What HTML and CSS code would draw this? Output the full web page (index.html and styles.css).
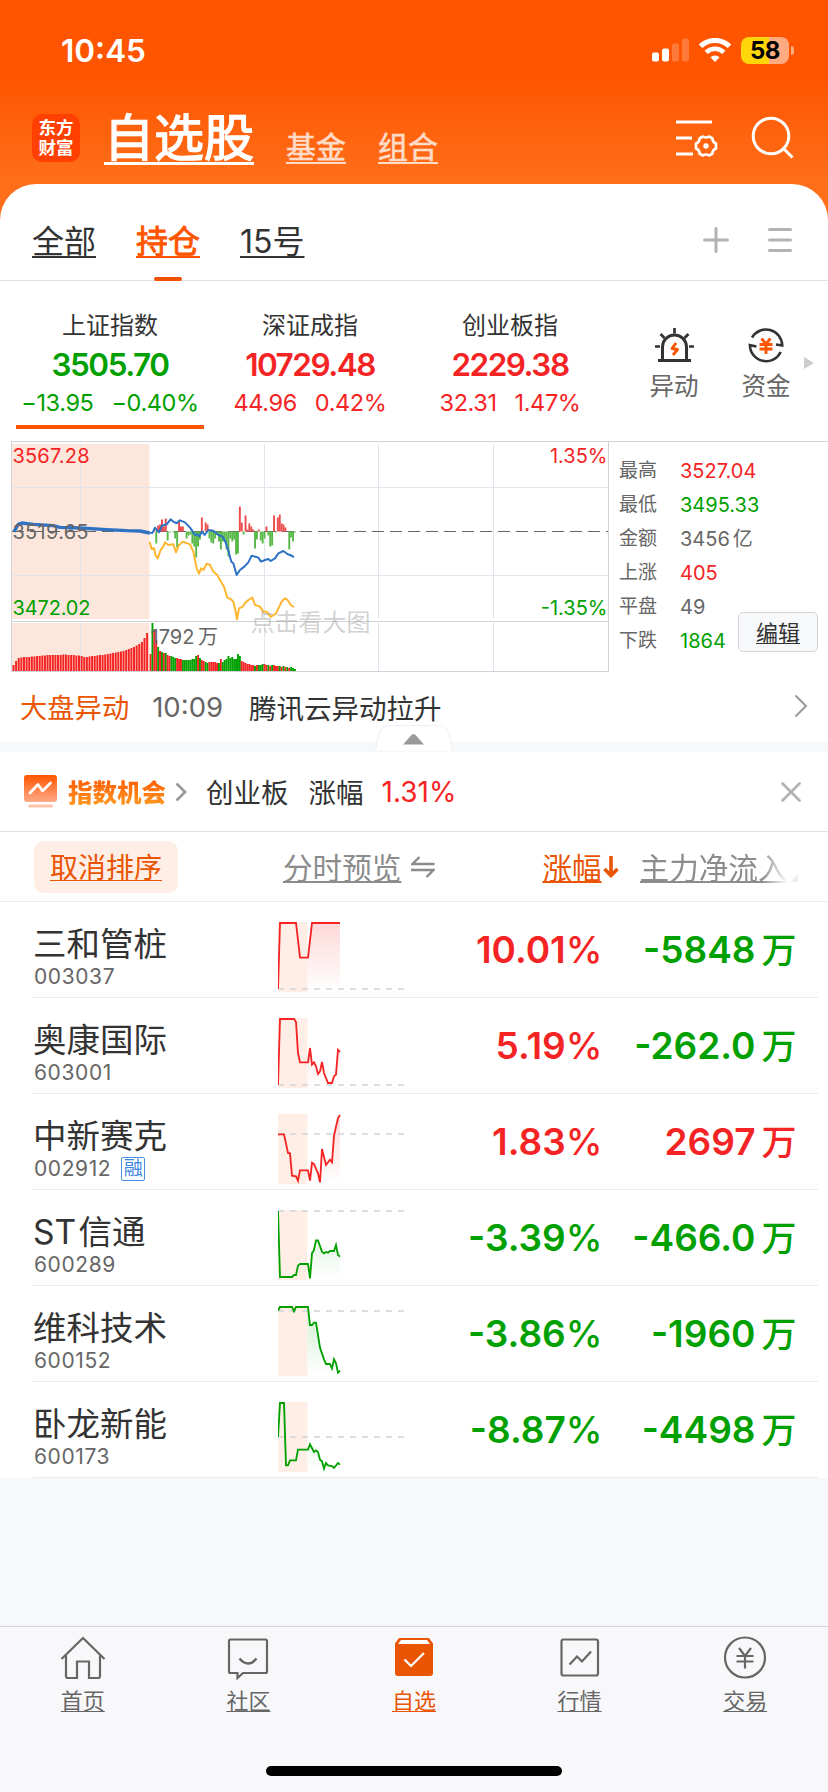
FILE: index.html
```html
<!DOCTYPE html>
<html lang="zh-CN">
<head>
  <meta charset="UTF-8" />
  <meta name="viewport" content="width=device-width, initial-scale=1.0"/>
  <title>自选股</title>
  <link rel="stylesheet" href="styles.css">
</head>
<body>
  <header class="header">
    <div class="status">
      <span class="time">10:45</span>
      <svg class="signal" width="37" height="24" viewBox="0 0 37 24" fill="#fff">
        <rect x="0" y="14.500" width="7" height="9" rx="2"/>
        <rect x="10" y="10.500" width="7" height="13" rx="2"/>
        <rect x="20" y="5.500" width="7" height="18" rx="2" opacity=".22"/>
        <rect x="30" y=".5" width="7" height="23" rx="2" opacity=".22"/>
      </svg>
      <svg class="wifi" width="32" height="24" viewBox="0 0 32 24">
        <path d="M1.500 8.200A21 21 0 0 1 30.500 8.200" fill="none" stroke="#fff" stroke-width="5"/>
        <path d="M7.200 14.300A12.500 12.500 0 0 1 24.800 14.300" fill="none" stroke="#fff" stroke-width="4.600"/>
        <path d="M11.400 19.200A7 7 0 0 1 20.600 19.200L16 24Z" fill="#fff"/>
      </svg>
      <span class="battery">58</span>
      <span class="battery-tip"></span>
    </div>
    <div class="title-row">
      <div class="logo"><span>东方</span><span>财富</span></div>
      <a class="title">自选股</a>
      <a class="subtitle">基金</a>
      <a class="subtitle">组合</a>
      <svg class="filter" width="44" height="40" viewBox="0 0 44 40" fill="none" stroke="#fff" stroke-width="3">
        <path d="M1 4H37M1 20H17M1 36H18"/>
        <path d="M28 18.500Q31 20.500 34 18.500L37.300 20.200Q37.300 24 41 25.500V30.500Q37.300 32 37.300 35.800L34 37.500Q31 35.500 28 37.500L24.700 35.800Q24.700 32 21 30.500V25.500Q24.700 24 24.700 20.200Z" stroke-width="2.700" stroke-linejoin="round"/>
        <circle cx="31" cy="28" r="2.700" fill="#fff" stroke="none"/>
      </svg>
      <svg class="search" width="44" height="44" viewBox="0 0 44 44" fill="none" stroke="#fff" stroke-width="3">
        <circle cx="20" cy="20" r="17.800"/>
        <path d="M32.500 32.500L41.500 41.500"/>
      </svg>
    </div>
  </header>

  <main class="sheet-wrap">
    <section class="sheet">
      <nav class="tabs">
        <a class="tab">全部</a>
        <a class="tab active">持仓</a>
        <a class="tab">15号</a>
        <svg class="plus" width="26" height="26" viewBox="0 0 26 26" stroke="#b3b3b3" stroke-width="3" stroke-linecap="round"><path d="M1.500 13H24.500M13 1.500V24.500"/></svg>
        <svg class="list" width="24" height="26" viewBox="0 0 24 26" stroke="#b3b3b3" stroke-width="3" stroke-linecap="round"><path d="M1.500 2.500H22.500M1.500 13H22.500M1.500 23.500H22.500"/></svg>
      </nav>

      <div class="indexes">
        <div class="index down selected">
          <div class="index-name">上证指数</div>
          <div class="index-value">3505.70</div>
          <div class="index-change"><span>−13.95</span><span>−0.40%</span></div>
        </div>
        <div class="index up">
          <div class="index-name">深证成指</div>
          <div class="index-value">10729.48</div>
          <div class="index-change"><span>44.96</span><span>0.42%</span></div>
        </div>
        <div class="index up">
          <div class="index-name">创业板指</div>
          <div class="index-value">2229.38</div>
          <div class="index-change"><span>32.31</span><span>1.47%</span></div>
        </div>
        <div class="tool tool-alert">
          <svg width="40" height="36" viewBox="0 0 40 36" fill="none" stroke="#333" stroke-width="3">
            <path d="M4 33.500H37M8.500 33V20A12 12 0 0 1 32.500 20V33"/>
            <path d="M20.500 1V6.500M6.500 7L10.500 11M34.500 7L30.500 11M1 19.500H6M35 19.500H40" stroke-width="2.700"/>
            <path d="M22 16L18 21.500L23.500 22.500L19 28" stroke="#ff5500" stroke-width="2.800" stroke-linejoin="round"/>
          </svg>
          <span>异动</span>
        </div>
        <div class="tool">
          <svg width="40" height="36" viewBox="0 0 40 36" fill="none" stroke="#333" stroke-width="2.600">
            <path d="M6 10.500A16.200 16.200 0 0 1 36.200 18.500L30 17.500"/>
            <path d="M10.500 19.500L3.900 18.200A16.200 16.200 0 0 0 34.700 25"/>
            <path d="M15.500 11.500L20 17L24.500 11.500M13.500 17.500H26.500M13.500 22H26.500M20 17V27" stroke="#ff5500" stroke-width="2.800"/>
          </svg>
          <span>资金</span>
        </div>
        <svg class="more" width="10" height="12" viewBox="0 0 10 12"><path d="M0 0L10 6L0 12Z" fill="#ccc"/></svg>
      </div>

      <div class="market">
        <svg class="chart" width="609" height="231" viewBox="0 0 609 231">
          <rect x="12" y="3" width="137.500" height="175" fill="#fde6db"/>
          <rect x="12" y="182" width="137.500" height="48" fill="#fde6db"/>
          <path d="M80.500 3V178M264.500 3V178M378.500 3V178M493.500 3V178M80.500 182V230M264.500 182V230M378.500 182V230M493.500 182V230M12 46.500H608M12 134.500H608" stroke="#e2e4ec" fill="none"/>
          <path d="M11 .5H609M11.500 0V230.500H608.500V0M12 180.500H608" stroke="#d0d3d9" fill="none"/>
          <path d="M12 90.500H608" stroke="#666" stroke-dasharray="12 6"/>
          <g id="flow"></g>
          <g id="volume"></g>
          <!-- lines are plotted on a 3x grid -->
          <g transform="translate(0 -6) scale(.33333)" fill="none" stroke-linejoin="round">
            <path stroke="#ffb62e" stroke-width="6" d="M449 320L455 342L462 340L467 362L473 370L482 345L490 335L495 322L505 330L520 328L528 352L536 332L548 320L570 328L580 350L590 400L597 416L603 400L610 405L620 386L630 390L640 410L652 420L660 435L672 455L682 488L692 492L700 500L706 525L711 553L717 520L728 515L735 504L745 495L757 488L765 510L780 515L790 530L800 530L812 546L828 535L845 500L855 490L863 495L872 510L882 516"/>
            <path stroke="#2e72c4" stroke-width="10" d="M42 290L55 268L65 264L100 268L160 272L180 277L240 279L320 284L380 287L420 288L449 294"/>
            <path stroke="#2e72c4" stroke-width="6" d="M449 294L458 293L465 278L477 292L486 272L500 268L512 253L520 260L530 265L540 256L555 262L570 278L585 300L592 298L598 304L606 290L614 300L625 285L640 287L655 300L668 305L676 320L686 350L694 380L700 385L710 420L720 405L733 395L745 382L755 362L775 368L783 380L795 375L805 372L812 378L825 370L835 355L850 348L862 357L870 360L882 366"/>
          </g>
          <g class="chart-text">
            <text x="12.500" y="21.500" fill="#f52424" textLength="77">3567.28</text>
            <text x="12.500" y="97.500" fill="#666" textLength="76">3519.65</text>
            <text x="12.500" y="173.500" fill="#00a000" textLength="78">3472.02</text>
            <text x="607.500" y="21.500" fill="#f52424" text-anchor="end">1.35%</text>
            <text x="607.500" y="173.500" fill="#00a000" text-anchor="end">-1.35%</text>
            <text class="volume-max" x="150.500" y="202.500" fill="#666">1792 万</text>
            <text class="watermark" x="250.500" y="190">点击看大图</text>
          </g>
        </svg>
        <div class="stats">
          <span>最高</span><b class="up">3527.04</b>
          <span>最低</span><b class="down">3495.33</b>
          <span>金额</span><b>3456<i>亿</i></b>
          <span>上涨</span><b class="up">405</b>
          <span>平盘</span><b>49</b>
          <span>下跌</span><b class="down">1864</b>
          <a class="edit">编辑</a>
        </div>
      </div>

      <div class="news">
        <span class="news-tag">大盘异动</span>
        <span class="news-time">10:09</span>
        <span class="news-text">腾讯云异动拉升</span>
        <svg width="14" height="24" viewBox="0 0 14 24" fill="none" stroke="#999" stroke-width="2"><path d="M1.500 1.500L12 12L1.500 22.500"/></svg>
      </div>
    </section>

    <div class="divider">
      <svg class="fold" width="78" height="26" viewBox="0 0 78 26">
        <path d="M.5 25.500L3 12Q5 .5 15 .5H63Q73 .5 75 12L77.500 25.500" fill="#fff" stroke="#eeeff2"/>
        <path d="M28 19.500L37 9.500Q38.500 8.500 40 9.500L49 19.500Z" fill="#999"/>
      </svg>
    </div>

    <section class="chance">
      <svg width="34" height="34" viewBox="0 0 34 34">
        <defs><linearGradient id="card" x1="0" y1="0" x2="0" y2="1"><stop offset="0" stop-color="#ff5500"/><stop offset="1" stop-color="#ffaa88"/></linearGradient></defs>
        <rect width="33" height="27" rx="3" fill="url(#card)"/>
        <path d="M6 18L14 9.500L18.500 16L26.500 8" fill="none" stroke="#fff" stroke-width="2.700" stroke-linecap="round" stroke-linejoin="round"/>
        <rect x="4" y="29.500" width="25" height="3" rx="1.500" fill="#ffc4a8"/>
      </svg>
      <span class="chance-title">指数机会</span>
      <svg class="chance-arrow" width="12" height="20" viewBox="0 0 12 20" fill="none" stroke="#999" stroke-width="2.700"><path d="M1.500 1.500L10 10L1.500 18.500"/></svg>
      <span class="chance-board">创业板</span>
      <span class="chance-label">涨幅</span>
      <span class="chance-value up">1.31%</span>
      <svg class="close" width="20" height="20" viewBox="0 0 20 20" stroke="#b3b3b3" stroke-width="2.700" stroke-linecap="round"><path d="M1.500 1.500L18.500 18.500M18.500 1.500L1.500 18.500"/></svg>
    </section>

    <section class="table">
      <div class="table-head">
        <a class="cancel">取消排序</a>
        <a class="col-preview">分时预览</a>
        <svg class="swap" width="24" height="22" viewBox="0 0 24 22" fill="none" stroke="#8c8c8c" stroke-width="2.400"><path d="M8.500 1L1.500 8H23.500M0 14H22.500L15.500 21"/></svg>
        <a class="col-rise">涨幅</a>
        <svg class="sort" width="16" height="22" viewBox="0 0 16 22" fill="none" stroke="#ea5504" stroke-width="3.600"><path d="M8 0V19M1.500 13L8 19.500L14.500 13"/></svg>
        <a class="col-flow">主力净流入</a>
        <svg class="corner" width="8" height="8" viewBox="0 0 8 8"><path d="M8 0V8H0Z" fill="#eee"/></svg>
      </div>
      <div id="rows"></div>
    </section>
  </main>

  <nav class="tabbar">
    <a>
      <svg width="46" height="44" viewBox="0 0 46 44"><path d="M1.500 23L23 2L44.500 23M6 19.500V40Q6 42 8 42H17V25.500H29V42H38Q40 42 40 40V19.500"/></svg>
      <span>首页</span>
    </a>
    <a>
      <svg width="46" height="44" viewBox="0 0 46 44"><path d="M5.500 3.500H40.500Q42 3.500 42 5V35.500Q42 37 40.500 37H18L12.500 42V37H5.500Q4 37 4 35.500V5Q4 3.500 5.500 3.500Z"/><path d="M14.500 22.500Q23 32.500 31.500 22.500" stroke-width="2.600"/></svg>
      <span>社区</span>
    </a>
    <a class="current">
      <svg width="46" height="44" viewBox="0 0 46 44"><path class="solid" d="M8 2H38L42 7.500V37Q42 40 39 40H7Q4 40 4 37V7.500Z"/><path d="M10 4H36L39 8H7Z" fill="#fff" stroke="none"/><path class="tick" d="M13.500 23.500L20 30L33 17"/></svg>
      <span>自选</span>
    </a>
    <a>
      <svg width="46" height="44" viewBox="0 0 46 44"><rect x="4.500" y="3.500" width="36.500" height="36" rx="2"/><path d="M12.500 28.500L20 20.500L25 25.500L34 15.500"/></svg>
      <span>行情</span>
    </a>
    <a>
      <svg width="46" height="44" viewBox="0 0 46 44"><circle cx="23" cy="21.500" r="20"/><path d="M17 12L23 20L29 12M14.500 20H31.500M14.500 25.500H31.500M23 20V32.500"/></svg>
      <span>交易</span>
    </a>
  </nav>
  <div class="home-bar"></div>

  <script src="script.js"></script>
</body>
</html>
```
FILE: styles.css
```css
* {
  box-sizing: border-box;
}
body {
  margin: 0;
  width: 828px;
  height: 1792px;
  overflow: hidden;
  display: flex;
  flex-direction: column;
  background: #f7f8fb;
  color: #333;
  font-family: Inter, "Noto Sans CJK SC", sans-serif;
}
svg {
  display: block;
  flex: none;
}
a {
  color: inherit;
  text-decoration: underline;
  text-decoration-skip-ink: none;
  white-space: nowrap;
}
.up {
  color: #f52424;
}
.down {
  color: #00a000;
}

/* header */
.header {
  height: 184px;
  color: #fff;
  background: linear-gradient(#ff5500 0, #ff5500 78px, #ff6f1a 184px);
}
.status {
  height: 100px;
  padding: 0 34px 0 61px;
  display: flex;
  align-items: center;
}
.time {
  font-size: 31.5px;
  font-weight: 600;
  flex: 1;
}
.wifi {
  margin: 0 10px 0 10px;
}
.battery {
  width: 48px;
  height: 27px;
  border-radius: 8px;
  background: linear-gradient(90deg, #ffd60a 28px, #ffaa80 28px);
  color: #000;
  font-size: 24px;
  font-weight: 700;
  line-height: 27px;
  text-align: center;
  letter-spacing: -0.5px;
}
.battery-tip {
  width: 3px;
  height: 9px;
  margin-left: 2px;
  border-radius: 0 4px 4px 0;
  background: #ffaa80;
}
.title-row {
  height: 76px;
  padding: 0 33px 0 32px;
  display: flex;
  align-items: center;
}
.logo {
  width: 48px;
  height: 48px;
  border-radius: 10px;
  background: #ff4000;
  font-size: 17.5px;
  font-weight: 700;
  line-height: 20px;
  display: flex;
  flex-direction: column;
  align-items: center;
  justify-content: center;
}
.title {
  margin-left: 24px;
  font-size: 50px;
  line-height: 60px;
  -webkit-text-stroke: 1.4px #fff;
  text-decoration-thickness: 3px;
  text-underline-offset: 6px;
}
.subtitle {
  margin: 18px 0 0 32px;
  font-size: 30px;
  line-height: 36px;
  color: #ffdcc8;
  -webkit-text-stroke: 0.6px #ffdcc8;
  text-decoration-thickness: 2px;
  text-underline-offset: 4px;
}
.filter {
  margin-left: auto;
}
.search {
  margin: 0 0 0 32px;
}

/* tabs */
.sheet-wrap {
  flex: 1;
  background: linear-gradient(#ff6f1a 50px, #f7f8fb 50px);
}
.sheet {
  background: #fff;
  border-radius: 36px 36px 0 0;
}
.tabs {
  height: 97px;
  padding: 20px 36px 0 32px;
  display: flex;
  align-items: center;
  border-bottom: 1px solid #e2e2e2;
}
.tab {
  margin-right: 40px;
  font-size: 32px;
  line-height: 40px;
  text-decoration-thickness: 2px;
  text-underline-offset: 3px;
}
.tab.active {
  position: relative;
  color: #ff5500;
  -webkit-text-stroke: 0.9px #ff5500;
}
.tab.active::after {
  content: "";
  position: absolute;
  left: 18px;
  top: 55px;
  width: 28px;
  height: 4px;
  border-radius: 2px;
  background: #f25000;
}
.plus {
  margin: -4px 39px 0 auto;
}
.list {
  margin-top: -4px;
}

/* indexes */
.indexes {
  height: 160px;
  padding: 30px 14px 0 16px;
  display: flex;
  align-items: flex-start;
}
.index {
  width: 188px;
  margin-right: 12px;
  text-align: center;
}
.index-name {
  font-size: 24px;
  line-height: 30px;
  color: #333;
}
.index-value {
  margin-top: 4px;
  font-size: 31.5px;
  font-weight: 600;
  line-height: 40px;
  letter-spacing: -1.5px;
}
.index-change {
  margin-top: 3px;
  padding-bottom: 7px;
  display: flex;
  justify-content: center;
  gap: 18px;
  font-size: 23.5px;
  line-height: 30px;
  letter-spacing: -0.4px;
  border-bottom: 4px solid transparent;
}
.selected .index-change {
  border-color: #ff5500;
}
.tool {
  width: 52px;
  margin: 16px 0 0 40px;
  display: flex;
  flex-direction: column;
  align-items: center;
  gap: 6px;
  font-size: 24.5px;
  line-height: 34px;
  color: #666;
}
.tool-alert {
  margin-left: 32px;
}
.more {
  margin: 46px 0 0 auto;
}

/* market chart */
.market {
  height: 231px;
  display: flex;
}
.chart-text {
  font-size: 20px;
}
.volume-max {
  word-spacing: -2px;
}
.watermark {
  font-size: 24px;
  fill: #999;
  fill-opacity: 0.45;
}
.stats {
  position: relative;
  flex: 1;
  padding: 12px 0 0 10px;
  border-top: 1px solid #d0d3d9;
  display: grid;
  grid-template-columns: 61px 1fr;
  grid-auto-rows: 34px;
  align-content: start;
  font-size: 19px;
  line-height: 34px;
  color: #666;
}
.stats b {
  font-size: 20px;
  font-weight: 400;
}
.stats i {
  margin-left: 3px;
  font-style: normal;
}
.edit {
  position: absolute;
  left: 129px;
  top: 170px;
  width: 80px;
  height: 40px;
  border: 1px solid #d0d3d9;
  border-radius: 5px;
  background: #f7f8fa;
  color: #333;
  font-size: 22px;
  line-height: 40px;
  text-align: center;
  text-decoration-thickness: 1px;
  text-underline-offset: 2px;
}

/* news */
.news {
  height: 70px;
  padding: 0 20px;
  display: flex;
  align-items: center;
  font-size: 27.5px;
}
.news-tag {
  margin-top: -2px;
  font-size: 27.3px;
  color: #ea5504;
}
.news-time {
  margin: -1px 26px 0 23px;
  color: #666;
}
.news-text {
  margin-top: -1px;
}
.news svg {
  margin: -2px 0 0 auto;
}
.divider {
  position: relative;
  height: 10px;
  background: #f7f8fa;
}
.fold {
  position: absolute;
  left: 375px;
  top: -17px;
}

/* index chance */
.chance {
  height: 80px;
  padding: 0 27px 0 24px;
  display: flex;
  align-items: center;
  background: #fff;
  border-bottom: 1px solid #e2e2e2;
  font-size: 27.5px;
}
.chance-title {
  margin-left: 10px;
  font-size: 24.5px;
  font-weight: 900;
  background: linear-gradient(#ff5000, #ffa024);
  background-clip: text;
  -webkit-background-clip: text;
  color: transparent;
}
.chance-arrow {
  margin: 0 19px 0 9px;
}
.chance-board,
.chance-label {
  margin-top: -1px;
}
.chance-label {
  margin-left: 20px;
}
.chance-value {
  margin-left: 18px;
  font-size: 28px;
}
.close {
  margin-left: auto;
}

/* table */
.table {
  background: #fff;
}
.table-head {
  height: 70px;
  padding-left: 34px;
  display: flex;
  align-items: center;
  border-bottom: 1px solid #ebebeb;
  font-size: 29.6px;
  color: #8c8c8c;
}
.cancel {
  width: 144px;
  height: 52px;
  border-radius: 10px;
  background: #ffeee6;
  color: #ea5504;
  font-size: 28px;
  line-height: 54px;
  text-align: center;
  text-decoration-thickness: 1px;
  text-underline-offset: 2px;
}
.col-preview,
.col-rise,
.col-flow {
  text-decoration-thickness: 2px;
  text-underline-offset: 2px;
}
.col-preview {
  margin-left: 105px;
}
.swap {
  margin-left: 10px;
}
.col-rise {
  margin-left: 107px;
  color: #ea5504;
}
.sort {
  margin-left: 1px;
}
.col-flow {
  margin-left: 21px;
  -webkit-mask-image: linear-gradient(90deg, #000 82%, transparent);
  mask-image: linear-gradient(90deg, #000 82%, transparent);
}
.corner {
  margin: 22px 0 0 2px;
}
.row {
  height: 96px;
  margin: 0 10px 0 33px;
  display: grid;
  grid-template-columns: 245px 130px 194.5px 194px;
  border-bottom: 1px solid #ebebeb;
}
.name {
  padding-top: 22px;
  font-size: 33.5px;
  line-height: 40px;
  word-spacing: -7px;
}
.code {
  padding: 1px 0 0 1px;
  display: flex;
  align-items: center;
  font-size: 21px;
  line-height: 24px;
  letter-spacing: 0.6px;
  color: #666;
}
.badge {
  width: 24px;
  height: 24px;
  margin-left: 10px;
  border: 1px solid #4a90e2;
  border-radius: 2px;
  color: #3a86de;
  font-size: 19px;
  line-height: 22px;
  letter-spacing: 0;
  text-align: center;
}
.spark {
  margin-top: 20px;
}
.pct,
.money {
  text-align: right;
  font-size: 37px;
  font-weight: 600;
  line-height: 95px;
  white-space: nowrap;
}
.pct span {
  font-weight: 500;
}
.money span {
  margin-left: 6px;
  font-size: 35px;
  font-weight: 500;
}

/* bottom bar */
.tabbar {
  height: 140px;
  padding-top: 9px;
  border-top: 1px solid #d0d5de;
  background: #f8f8fa;
  display: flex;
}
.tabbar a {
  flex: 1;
  display: flex;
  flex-direction: column;
  align-items: center;
  gap: 4px;
  color: #666;
  font-size: 22px;
  line-height: 34px;
  text-decoration-thickness: 1px;
  text-underline-offset: 2px;
}
.tabbar svg {
  fill: none;
  stroke: #666;
  stroke-width: 2.2;
}
.tabbar .current {
  color: #ea5504;
}
.tabbar .solid {
  fill: #ea5504;
  stroke: none;
}
.tabbar .tick {
  stroke: #fff;
}
.home-bar {
  height: 26px;
  background: #f8f8fa;
}
.home-bar::before {
  content: "";
  display: block;
  width: 296px;
  height: 10px;
  margin: 0 auto;
  border-radius: 5px;
  background: #000;
}
```
FILE: script.js
```js
const RED = "#f52424";
const GREEN = "#00a000";

function bar(x, y, w, h, color) {
  return `<rect x="${x}" y="${y}" width="${w}" height="${h}" fill="${color}"/>`;
}

// minute by minute buy / sell pressure, positive is red
const flow = [
  0, 0, 2, -12, 6, 7, 12, 5, 13, -9, -1, 0, -1, -7, -16, 11, 5, 5, 0, -7,
  -4, -3, -12, -15, -26, -15, -8, 14, 0, 9, 7, -7, -11, -12, -7, -3, -10, -18, -10, -10,
  -18, -25, -7, -10, -8, -23, -22, 25, 9, -3, 16, 2, 8, 5, 2, -17, -8, 2, -9, -12,
  -7, 5, -4, -15, -14, 16, -1, 14, 17, 8, 7, 4, 0, -18, -6, -10, -1
];
document.getElementById("flow").innerHTML = flow.map((v, i) =>
  bar(149.600 + i * 1.9, v > 0 ? 90.500 - v : 90.500, 1.900, Math.abs(v), v > 0 ? "#ee4b4b" : "#58b848")
).join("");

// call auction volume, then minute volume
const auction = [6, 10, 13, 13.500, 14, 14, 14, 14.500, 14.500, 15, 15, 15.500, 15.500, 16, 16, 16, 16, 16, 16, 16.500, 16.500, 16, 16, 16, 15.500, 15.500, 15, 14, 14, 14.500, 15, 15, 15.500, 16, 16, 16.500, 17, 17.500, 18, 18.500, 19, 19.500, 20, 21, 22, 23, 24, 25.500, 27, 29, 33, 38];
const minutes = [17, 48, 40, 31, 24, 20, 19, 18, 18, 16, 15, 15, 14, 13, 13, 12, 12, 11, 11, 11, 11, 11, 12, 12, 15, 16, 13, 11, 10, 9, 8, 9, 9, 9, 9, 8, 8, 12, 9, 11, 12, 15, 13, 14, 12, 12, 17, 15, 10, 9, 8, 7, 7, 6, 6, 5, 6, 6, 6, 7, 7, 6, 6, 5, 6, 6, 5, 5, 5, 4, 5, 4, 4, 3, 4, 3, 2];
const colors = "rgrrgrgrgrrgggrrrggggggggrgrrggrrrrrgrggggggggggrrrrrrrgrgggrrgrgrrrgrgrgrgg";
document.getElementById("volume").innerHTML =
  auction.map((v, i) => bar(12.500 + i * 2.62, 230 - v, 2, v, RED)).join("") +
  minutes.map((v, i) => bar(149.600 + i * 1.9, 230 - v, 1.900, v, colors[i] === "r" ? RED : GREEN)).join("");

const stocks = [
  { name: "三和管桩", code: "003037", pct: "10.01", money: "5848", neg: true, base: 201,
    line: "0,201 6,3 54,3 66,107 90,107 102,3 186,3" },
  { name: "奥康国际", code: "603001", pct: "5.19", money: "262.0", neg: true, base: 201,
    line: "0,201 6,3 48,3 54,12 60,105 66,133 90,133 96,90 102,140 108,133 114,145 120,168 126,160 132,132 138,165 150,195 162,195 168,175 174,170 180,95 186,102" },
  { name: "中新赛克", code: "002912", badge: "融", pct: "1.83", money: "2697", neg: false, base: 60,
    line: "0,61 18,61 30,117 36,118 42,185 54,187 60,200 66,169 90,169 96,200 102,146 108,150 120,178 126,205 132,105 144,153 156,137 162,145 168,65 180,12 186,3" },
  { name: "ST 信通", code: "600289", pct: "-3.39", money: "466.0", neg: true, base: 3,
    line: "0,3 6,201 42,201 48,195 54,195 60,167 66,162 90,162 96,205 102,130 108,120 114,91 120,91 132,125 138,130 144,126 150,128 156,123 168,123 174,105 180,135 186,140" },
  { name: "维科技术", code: "600152", pct: "-3.86", money: "1960", neg: true, base: 15,
    line: "0,14 6,3 42,3 48,16 54,3 90,3 96,57 102,57 108,50 114,50 126,125 138,160 144,174 156,174 162,187 168,160 174,172 180,200 186,194" },
  { name: "卧龙新能", code: "600173", pct: "-8.87", money: "4498", neg: true, base: 105,
    line: "0,105 6,3 18,3 24,190 30,190 36,175 54,175 60,143 90,143 96,127 108,150 114,145 120,150 126,173 132,178 138,200 144,183 150,190 162,192 168,198 180,183 186,188" }
];

document.getElementById("rows").innerHTML = stocks.map((s, i) => {
  const down = s.pct.startsWith("-");
  const color = down ? GREEN : RED;
  return `
    <div class="row">
      <div>
        <div class="name">${s.name}</div>
        <div class="code">${s.code}${s.badge ? `<span class="badge">${s.badge}</span>` : ""}</div>
      </div>
      <svg class="spark" width="128" height="70" viewBox="0 0 384 210">
        <defs>
          <linearGradient id="fill${i}" x1="0" y1="0" x2="0" y2="1">
            <stop offset="0" stop-color="${color}" stop-opacity=".18"/>
            <stop offset="1" stop-color="${color}" stop-opacity="0"/>
          </linearGradient>
          <clipPath id="clip${i}"><rect x="88" width="98" height="210"/></clipPath>
        </defs>
        <rect width="88" height="210" fill="#ffeee6"/>
        <polygon points="0,206 ${s.line} 186,206" fill="url(#fill${i})" clip-path="url(#clip${i})"/>
        <path d="M0 ${s.base}H378" stroke="#d0d3da" stroke-width="5" stroke-dasharray="18 18"/>
        <polyline points="${s.line}" fill="none" stroke="${color}" stroke-width="5.500"/>
      </svg>
      <div class="pct ${down ? "down" : "up"}">${s.pct}<span>%</span></div>
      <div class="money ${s.neg ? "down" : "up"}">${s.neg ? "-" : ""}${s.money}<span>万</span></div>
    </div>`;
}).join("");
```
